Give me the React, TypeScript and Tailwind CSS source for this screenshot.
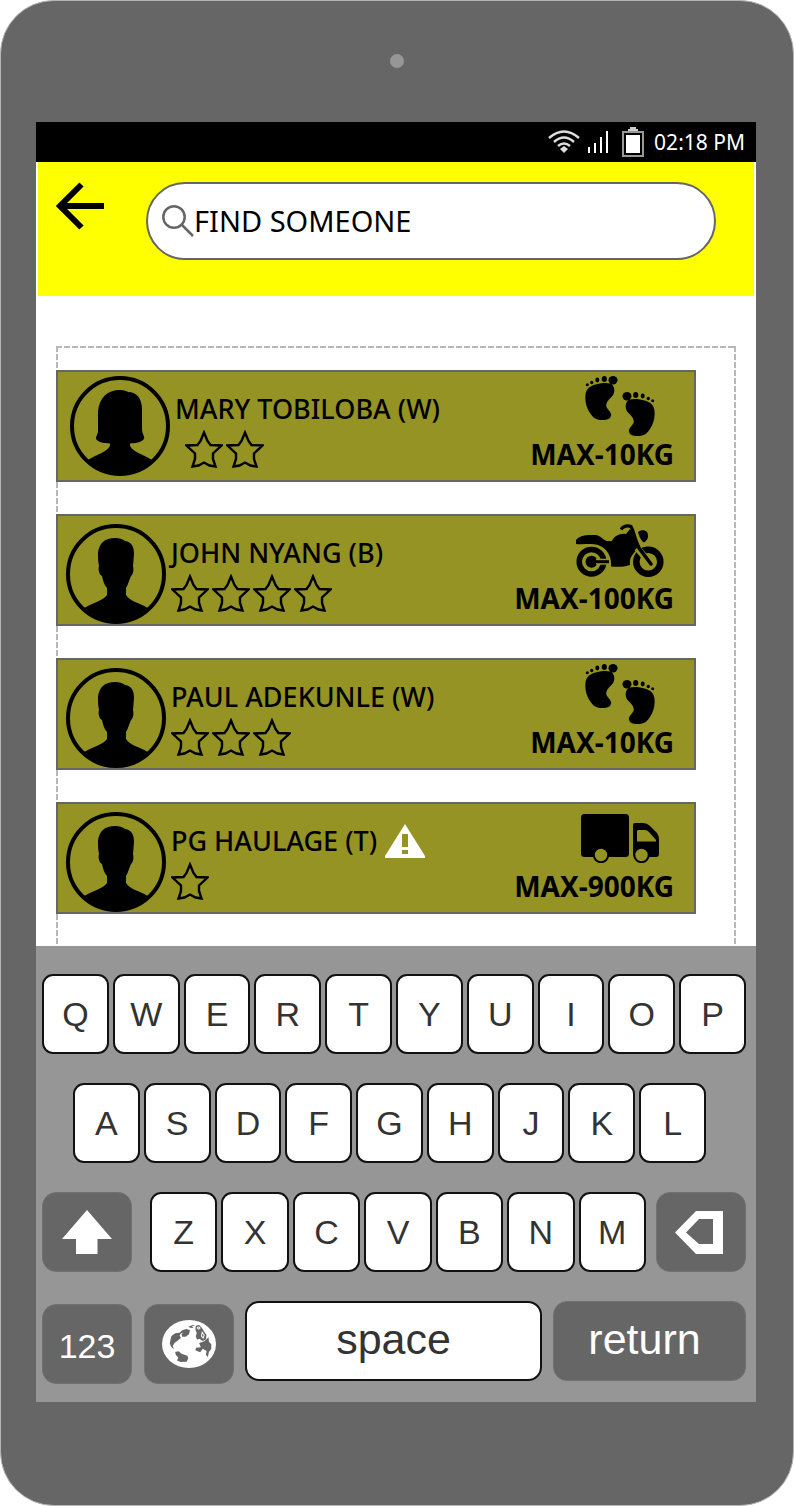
import React from "react";

type Vehicle = "feet" | "motorcycle" | "truck";

interface Carrier {
  name: string;
  stars: number;
  max: string;
  vehicle: Vehicle;
  female?: boolean;
  warning?: boolean;
}

const carriers: Carrier[] = [
  { name: "MARY TOBILOBA (W)", stars: 2, max: "MAX-10KG", vehicle: "feet", female: true },
  { name: "JOHN NYANG (B)", stars: 4, max: "MAX-100KG", vehicle: "motorcycle" },
  { name: "PAUL ADEKUNLE (W)", stars: 3, max: "MAX-10KG", vehicle: "feet" },
  { name: "PG HAULAGE (T)", stars: 1, max: "MAX-900KG", vehicle: "truck", warning: true },
];

function Avatar({ female }: { female?: boolean }) {
  return (
    <svg viewBox="0 0 100 100" className="h-[100px] w-[100px] shrink-0" aria-hidden="true">
      <circle cx="50" cy="50" r="48" fill="none" stroke="#000" strokeWidth="4" />
      {female ? (
        <path d="M50 14C54 14 57 15 58 16C67 16 72 23 72 33L72 54C72 58 75 60 74 63C71 67 65 67 60 67.500C59 75 73 78 82 84A46.700 46.700 0 0 1 18 84C27 78 41 75 40 67.500C34 67 29 67 26 63C26 59 28 59 28 54L28 36C29 22 37 14 50 14Z" />
      ) : (
        <path d="M49 14C53 14 57 15 59 17C66 18 68 23 68 30L67 42C68 46 67 51 65 52C63 56 62 61 60 64L60 71C63 77 74 79 82 84A46.700 46.700 0 0 1 18 84C27 79 38 76 41 71L41 64C38 61 37 56 36 52C33 51 32 46 33 42C32 38 32 33 32 29C33 19 39 14 49 14Z" />
      )}
    </svg>
  );
}

function Star() {
  return (
    <svg viewBox="0 0 38 38" className="h-[38px] w-[38px]" aria-hidden="true">
      <path
        d="M19 2.500L15.500 11L12.500 15L1.500 15.500L10 23.500V29L7.500 36.500L13.500 35.500L19 32.500L24.500 35.500L30.500 36.500L28 29V23.500L36.500 15.500L25.500 15L22.500 11Z"
        fill="none"
        stroke="#000"
        strokeWidth="2.400"
      />
    </svg>
  );
}

function Foot() {
  return (
    <>
      <path d="M15 7.500C21 6.500 26 7 28 9.500C30 13 30 18 26 21.500C22 25 20 29 22 32C24 35 27 37 26 40C25 43 22 44 18 44C12 44.500 8 42 5 37C1 31 0 25 .5 19C.8 13 5 9 15 7.500Z" />
      <ellipse cx="28" cy="4.200" rx="4.500" ry="4.200" />
      <ellipse cx="19.300" cy="3" rx="2.600" ry="3" />
      <ellipse cx="12.300" cy="4" rx="2" ry="2.400" />
      <circle cx="6.700" cy="6.500" r="1.700" />
      <circle cx="2.300" cy="8.700" r="1.500" />
    </>
  );
}

function VehicleIcon({ vehicle }: { vehicle: Vehicle }) {
  if (vehicle === "feet") {
    return (
      <svg viewBox="0 0 70 60" className="h-[60px] w-[70px]" aria-hidden="true">
        <Foot />
        <g transform="translate(70 16) scale(-1 1)">
          <Foot />
        </g>
      </svg>
    );
  }
  if (vehicle === "motorcycle") {
    return (
      <svg viewBox="0 0 88 54" className="h-[54px] w-[88px]" aria-hidden="true">
        <path d="M0 21V17C3 13 9 12 15 12H20C25 13 27 17 31 18H36C38 13 44 10 50 11L54 6L58 10L63 25C57 30 53 35 54 42C48 44 42 44 35 43.500C36 34 31 25 22 22C14 20 8 22 0 21Z" />
        <path d="M45 6.500C47 3 52 2 55 3.500C58 9 59 17 63 25L75 41.500" fill="none" stroke="#000" strokeWidth="3.200" />
        <path d="M62 9C65 6.500 69 7 71 9C73 13 72 17 68 19.500C65 18 63 13 62 9Z" />
        <circle cx="15.500" cy="38.700" r="12.300" fill="none" stroke="#000" strokeWidth="5.500" />
        <circle cx="15.500" cy="38.700" r="6" />
        <path d="M20 38.700H34" stroke="#949323" strokeWidth="6" />
        <path d="M16 38.700H33" stroke="#000" strokeWidth="3" />
        <circle cx="72.300" cy="38.700" r="12" fill="none" stroke="#000" strokeWidth="6.500" />
        <path d="M61 25L75 41" stroke="#949323" strokeWidth="6.500" />
        <path d="M57 13L63 25L75 41" fill="none" stroke="#000" strokeWidth="3.500" strokeLinecap="round" />
      </svg>
    );
  }
  return (
    <svg viewBox="0 0 78 49" className="h-[49px] w-[78px]" aria-hidden="true">
      <rect width="48" height="43" rx="3.500" />
      <path d="M52 11Q52 9 54 9H62Q66 9 69 12L76 19Q78 22 78 25V40Q78 43 75 43H54Q52 43 52 40Z" />
      <path d="M57 16H64Q66 16 68 18L75 26V27.500H56V17Z" fill="#949323" />
      <circle cx="20" cy="41" r="7.200" fill="#949323" stroke="#000" strokeWidth="2" />
      <circle cx="60.500" cy="41" r="7.200" fill="#949323" stroke="#000" strokeWidth="2" />
    </svg>
  );
}

function CarrierCard({ carrier }: { carrier: Carrier }) {
  return (
    <li
      className={`flex border-2 border-[#666] bg-[#949323] text-black ${
        carrier.female ? "pl-3" : "pl-2"
      }`}
    >
      <div className={carrier.female ? "pt-1 pb-1" : "pt-2"}>
        <Avatar female={carrier.female} />
      </div>
      <div className="min-w-0 flex-1 pt-[21px] pl-[5px]">
        <div className="flex h-8 items-center gap-2">
          <span className="text-[27px] leading-8 font-medium whitespace-nowrap">{carrier.name}</span>
          {carrier.warning && (
            <svg viewBox="0 0 40 34" className="h-[34px] w-10 shrink-0" role="img" aria-label="Warning">
              <path d="M20 0L40 32V34H0V32Z" fill="#fff" />
              <path d="M17 10H23V23H17ZM17 26H23V30H17Z" fill="#949323" />
            </svg>
          )}
        </div>
        <div
          role="img"
          aria-label={`${carrier.stars} stars`}
          className={`flex gap-[3px] pt-[5px] ${carrier.female ? "pl-2.5" : ""}`}
        >
          {Array.from({ length: carrier.stars }, (_, i) => (
            <Star key={i} />
          ))}
        </div>
      </div>
      <div className="flex shrink-0 flex-col items-end pt-1 pr-5">
        <div className="flex h-[60px] w-[108px] items-center justify-center">
          <VehicleIcon vehicle={carrier.vehicle} />
        </div>
        <span className="text-[28px] leading-9 font-bold whitespace-nowrap">{carrier.max}</span>
      </div>
    </li>
  );
}

function Key({ label }: { label: string }) {
  return (
    <button
      type="button"
      className="h-20 min-w-0 flex-1 rounded-[11px] border-2 border-[#111] bg-white text-[34px] leading-10 text-[#333]"
    >
      {label}
    </button>
  );
}

function Keys({ letters }: { letters: string }) {
  return (
    <>
      {letters.split("").map((l) => (
        <Key key={l} label={l} />
      ))}
    </>
  );
}

function Keyboard() {
  return (
    <section
      aria-label="Keyboard"
      className="flex flex-col gap-[29px] bg-[#969696] pt-7 pr-2.5 pb-[18px] pl-1.5 font-['Liberation_Sans',Arial,sans-serif]"
    >
      <div className="flex gap-1">
        <Keys letters="QWERTYUIOP" />
      </div>
      <div className="flex gap-1 pr-10 pl-[31px]">
        <Keys letters="ASDFGHJKL" />
      </div>
      <div className="flex">
        <button
          type="button"
          aria-label="Shift"
          className="flex h-20 w-[90px] shrink-0 items-center justify-center rounded-[14px] border border-[#717171] bg-[#666]"
        >
          <svg viewBox="0 0 50 44" className="h-11 w-[50px]" aria-hidden="true">
            <path d="M25 0L50 29H35.500V44H14V29H0Z" fill="#fff" />
          </svg>
        </button>
        <div className="flex min-w-0 flex-1 gap-1 pr-2.5 pl-[18px]">
          <Keys letters="ZXCVBNM" />
        </div>
        <button
          type="button"
          aria-label="Backspace"
          className="flex h-20 w-[90px] shrink-0 items-center justify-center rounded-[14px] border border-[#717171] bg-[#666] pr-1"
        >
          <svg viewBox="0 0 48 44" className="h-11 w-12" aria-hidden="true">
            <path d="M21 1H48V44H21L0 22.500ZM24 9L11 22.500L24 34H38V9Z" fill="#fff" fillRule="evenodd" />
          </svg>
        </button>
      </div>
      <div className="flex items-start">
        <div className="flex shrink-0 gap-3 pt-[3px]">
          <button
            type="button"
            className="h-20 w-[90px] rounded-[14px] border border-[#717171] bg-[#666] pt-1 text-[34px] leading-10 text-white"
          >
            123
          </button>
          <button
            type="button"
            aria-label="Language"
            className="flex h-20 w-[90px] items-center justify-center rounded-[14px] border border-[#717171] bg-[#666]"
          >
            <svg viewBox="0 0 160 144" preserveAspectRatio="none" className="h-12 w-[54px]" aria-hidden="true">
              <ellipse cx="80" cy="72" rx="80" ry="72" fill="#fff" />
              <g fill="#666">
                <path d="M28 48L39 40L52 38L60 31L72 27L83 31L80 43L70 50L60 50L58 43L63 38L57 40L52 46L56 54L45 63L38 68L32 77L35 88L27 80L23 70L25 60Z" />
                <path d="M39 96L49 94L58 101L75 107L78 115L73 125L56 126L45 122L48 112L41 105Z" />
                <path d="M78 20L91 15L98 17L88 19L94 24L83 23Z" />
                <path d="M100 17L110 15L118 23L126 37L132 45L130 58L121 63L110 56L104 59L100 49L103 39L99 29Z" />
                <path d="M110 69L125 64L138 52L139 65L146 73L146 87L139 96L136 111L130 104L132 93L121 86L113 97L99 91L101 83L115 82Z" />
              </g>
              <path d="M104 24Q108 18 113 24Q109 30 104 24M119 37L125 46L122 54L117 48Z" fill="none" stroke="#fff" strokeWidth="3" />
            </svg>
          </button>
        </div>
        <div className="min-w-0 flex-1 px-[11px]">
          <button
            type="button"
            className="h-20 w-full rounded-[14px] border-2 border-[#111] bg-white pb-1 text-[43px] leading-[50px] text-[#333]"
          >
            space
          </button>
        </div>
        <button
          type="button"
          className="h-20 w-[193px] shrink-0 rounded-[14px] border border-[#717171] bg-[#666] pr-2.5 pb-1 text-[43px] leading-[50px] text-white"
        >
          return
        </button>
      </div>
    </section>
  );
}

function StatusBar() {
  return (
    <div className="flex h-10 items-center justify-end bg-black pr-[11px] text-white">
      <svg viewBox="0 0 32 24" className="h-6 w-8" fill="none" stroke="#ddd" strokeWidth="2.500" aria-hidden="true">
        <path d="M1 8Q16 -5 31 8" />
        <path d="M6 12Q16 3 26 12" />
        <path d="M10 16Q16 11 22 16" />
        <path d="M16 16L20 19L16 23L12 19Z" fill="#ddd" stroke="none" />
      </svg>
      <svg viewBox="0 0 20 22" className="ml-2 h-[22px] w-5" fill="#fff" aria-hidden="true">
        <path d="M0 16H2V22H0ZM6 12H8V22H6ZM12 6H14V22H12ZM18 0H20V22H18Z" />
      </svg>
      <svg viewBox="0 0 22 30" className="ml-3.5 h-[30px] w-[22px]" aria-hidden="true">
        <path d="M8 0H14V2H16V4H6V2H8Z" fill="#ccc" />
        <rect x="1" y="5" width="20" height="24" fill="none" stroke="#999" strokeWidth="2" />
        <rect x="4" y="8" width="14" height="18" fill="#fff" />
      </svg>
      <time className="ml-2.5 font-['Noto_Sans',sans-serif] text-[21px] leading-8">02:18 PM</time>
    </div>
  );
}

export default function App() {
  return (
    <div className="bg-white">
      <div className="rounded-[54px] border border-[#b5b5b5] bg-[#666] pt-[53px] pr-[37px] pb-[103px] pl-[35px] font-['Noto_Sans',sans-serif]">
        <div className="flex justify-center pb-[54px] pl-0.5">
          <span className="h-3.5 w-3.5 rounded-full bg-[#969696]" />
        </div>
        <main className="bg-white">
          <StatusBar />
          <header className="mx-0.5 flex items-start gap-[42px] bg-[#ff0] pt-5 pr-[38px] pb-9 pl-[18px]">
            <button type="button" aria-label="Back" className="h-12 w-12 shrink-0">
              <svg viewBox="0 0 48 48" className="h-12 w-12" fill="none" stroke="#000" strokeWidth="6" aria-hidden="true">
                <path d="M25.500 2.500L4 24L25.500 45.500M4 24H48" />
              </svg>
            </button>
            <label className="flex h-[78px] min-w-0 flex-1 items-center rounded-full border-2 border-[#666] bg-white pr-6 pl-3.5">
              <svg viewBox="0 0 32 32" className="h-8 w-8 shrink-0" fill="none" stroke="#666" strokeWidth="2.500" aria-hidden="true">
                <circle cx="12" cy="12" r="10.700" />
                <path d="M19.500 19.500L31 31" />
              </svg>
              <input
                type="text"
                aria-label="Find someone"
                defaultValue="FIND SOMEONE"
                className="min-w-0 flex-1 bg-transparent text-[29px] leading-9 text-black outline-none"
              />
            </label>
          </header>
          <section className="px-5 pt-[50px]">
            <ul className="flex flex-col gap-8 bg-[image:repeating-linear-gradient(90deg,#b8b8b8_0px,#b8b8b8_6px,transparent_6px,transparent_8px),repeating-linear-gradient(180deg,#b8b8b8_0px,#b8b8b8_6px,transparent_6px,transparent_8px),repeating-linear-gradient(180deg,#b8b8b8_0px,#b8b8b8_6px,transparent_6px,transparent_8px)] [background-position:left_top,left_top,right_top] [background-size:100%_2px,2px_100%,2px_100%] bg-no-repeat pt-6 pr-10 pb-8">
              {carriers.map((c) => (
                <CarrierCard key={c.name} carrier={c} />
              ))}
            </ul>
          </section>
          <Keyboard />
        </main>
      </div>
    </div>
  );
}
